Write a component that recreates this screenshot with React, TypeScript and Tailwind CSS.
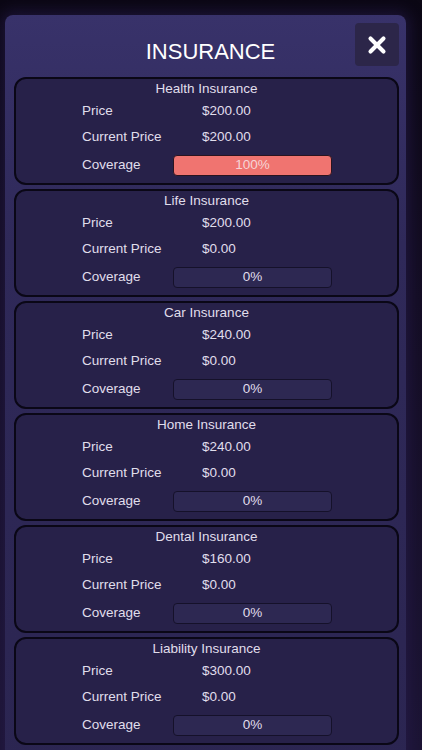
import { X } from "lucide-react";

type Plan = {
  name: string;
  price: string;
  current: string;
  coverage: number;
};

const plans: Plan[] = [
  { name: "Health Insurance", price: "$200.00", current: "$200.00", coverage: 100 },
  { name: "Life Insurance", price: "$200.00", current: "$0.00", coverage: 0 },
  { name: "Car Insurance", price: "$240.00", current: "$0.00", coverage: 0 },
  { name: "Home Insurance", price: "$240.00", current: "$0.00", coverage: 0 },
  { name: "Dental Insurance", price: "$160.00", current: "$0.00", coverage: 0 },
  { name: "Liability Insurance", price: "$300.00", current: "$0.00", coverage: 0 },
];

function InsuranceCard({ plan }: { plan: Plan }) {
  const full = plan.coverage >= 100;
  return (
    <div className="h-[108px] w-[385px] shrink-0 rounded-[12px] border-2 border-[#0a0716] bg-[#272149] pt-[1px] text-[13.5px] text-[#e0deec]">
      <div className="flex h-[18px] items-center justify-center">{plan.name}</div>
      <div className="flex h-[26px] items-center pl-[66px]">
        <span className="w-[91px]">Price</span>
        <span className="pl-[29px]">{plan.price}</span>
      </div>
      <div className="flex h-[26px] items-center pl-[66px]">
        <span className="w-[91px]">Current Price</span>
        <span className="pl-[29px]">{plan.current}</span>
      </div>
      <div className="flex h-[30px] items-center pl-[66px]">
        <span className="w-[91px]">Coverage</span>
        <div
          className={
            full
              ? "flex h-[21px] w-[159px] items-center justify-center rounded-[4px] border border-[#2a1420] bg-[#f07470] text-[#f6d4d6]"
              : "flex h-[21px] w-[159px] items-center justify-center rounded-[4px] border border-[#15112a] bg-[#2d2852]"
          }
        >
          {plan.coverage}%
        </div>
      </div>
    </div>
  );
}

export default function App() {
  return (
    <div
      className="h-[750px] w-[422px] overflow-hidden bg-[linear-gradient(180deg,#0b0714_0%,#140d24_40%,#1c1434_100%)] pl-[5px] pt-[15px]"
      style={{ fontFamily: '"Liberation Sans", Arial, sans-serif' }}
    >
      <div className="relative h-[760px] w-[401px] rounded-t-[8px] bg-[linear-gradient(180deg,#38326a_0%,#2f2959_30%,#2b2551_100%)] shadow-[0_0_14px_4px_rgba(40,30,80,0.55)]">
        <div className="flex h-[62px] items-center justify-center pl-[10px] pt-[10px] text-[22px] text-white">
          INSURANCE
        </div>
        <button className="absolute right-[7px] top-[8px] flex h-[43px] w-[44px] items-center justify-center rounded-[4px] bg-[#2c2649]">
          <X className="h-[26px] w-[26px] text-white" strokeWidth={3.75} />
        </button>
        <div className="flex flex-col gap-[4px] pl-[9px]">
          {plans.map((p) => (
            <InsuranceCard key={p.name} plan={p} />
          ))}
        </div>
      </div>
    </div>
  );
}
